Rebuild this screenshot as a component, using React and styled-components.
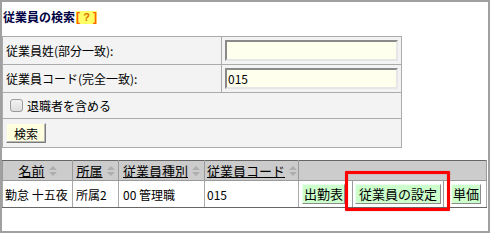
import React from "react";
import styled, { createGlobalStyle } from "styled-components";

const Global = createGlobalStyle`
  html, body { margin: 0; padding: 0; background: #fff; }
  body { font-family: "Noto Sans CJK JP", "Noto Sans", sans-serif; color: #000; }
`;

const Frame = styled.div`
  position: relative;
  width: 490px;
  height: 233px;
  box-sizing: border-box;
  border: 2px solid #a0a0a0;
  background: #fff;
  overflow: hidden;
`;

const Title = styled.h1`
  display: flex;
  align-items: center;
  height: 16px;
  margin: 7px 0 11px 1px;
  font-size: 12px;
  line-height: 16px;
  font-weight: bold;
  color: #000044;
`;

const Help = styled.span`
  display: inline-flex;
  align-items: center;
  justify-content: space-between;
  width: 21px;
  height: 13px;
  margin-left: 1px;
  background: #ffff66;
  color: #ff6600;
  font-size: 12px;
  line-height: 13px;
  font-weight: bold;
  font-family: "Liberation Sans", sans-serif;
`;

const Bracket = styled.span`
  color: #ff6600;
  font-weight: bold;
`;

const QMark = styled.span`
  color: #e07000;
  font-weight: bold;
  font-size: 11px;
`;

const SearchTable = styled.table`
  width: 400px;
  border-collapse: collapse;
  border: 1px solid #666;
  font-size: 12px;
`;

const Row = styled.tr`
  height: ${(p) => p.$h}px;
`;

const Cell = styled.td`
  background: #f3f3f3;
  border: 1px solid #ababab;
  padding: 0 ${(p) => p.$px ?? 3}px;
  white-space: nowrap;
  vertical-align: middle;
`;

const LabelCell = styled(Cell)`
  width: 212px;
`;

const TextInput = styled.input`
  display: block;
  box-sizing: border-box;
  width: 173px;
  height: 21px;
  margin: 0;
  padding: 0 1px;
  border: 2px solid;
  border-color: #8a8a8a #e6e6e6 #e6e6e6 #8a8a8a;
  background: #ffffee;
  font-family: "Noto Sans CJK JP", sans-serif;
  font-size: 12px;
  color: #000;
  outline: none;
`;

const CheckLabel = styled.label`
  display: flex;
  align-items: center;
  gap: 4px;
`;

const Check = styled.input`
  appearance: none;
  margin: 0;
  width: 13px;
  height: 13px;
  box-sizing: border-box;
  border: 1px solid #9c9c9c;
  border-radius: 3px;
  background: linear-gradient(#f2f2f2, #dedede);
`;

const SearchButton = styled.button`
  display: block;
  box-sizing: border-box;
  width: 40px;
  height: 20px;
  margin: 0;
  padding: 0;
  border: 1px solid;
  border-color: #f4f4f4 #7c7c7c #7c7c7c #f4f4f4;
  box-shadow: inset -1px -1px 0 #b8b8b8;
  background: #ffffe0;
  font-family: "Noto Sans CJK JP", sans-serif;
  font-size: 12px;
  color: #000;
`;

const ResultTable = styled.table`
  width: 485px;
  margin-top: 12px;
  border-collapse: collapse;
  table-layout: fixed;
  border: 1px solid #666;
  font-size: 12px;
`;

const HeadCell = styled.th`
  height: 18px;
  padding: 0 2px;
  background: #cccccc;
  border: 1px solid #9a9a9a;
  border-top-color: #666;
  font-size: 13px;
  font-weight: normal;
  text-align: center;
  white-space: nowrap;
  overflow: hidden;
`;

const HeadInner = styled.span`
  display: inline-flex;
  align-items: center;
  gap: 4px;
`;

const SortLink = styled.a`
  color: #000;
  text-decoration: underline;
  cursor: pointer;
`;

const DataCell = styled.td`
  height: 26px;
  padding: 0 ${(p) => p.$px ?? 3}px;
  background: #fff;
  border: 1px solid #aaaaaa;
  border-bottom-color: #666;
  white-space: nowrap;
  overflow: hidden;
`;

const ActionBar = styled.div`
  display: flex;
  align-items: center;
  gap: 7px;
  height: 26px;
`;

const Framed = styled.span`
  align-self: stretch;
  display: flex;
  align-items: center;
  padding: 0 2px;
  border-left: 1px solid #9a9a9a;
  border-right: 1px solid #9a9a9a;
`;

const ActionButton = styled.button`
  box-sizing: border-box;
  height: 20px;
  margin: 0;
  padding: 0 ${(p) => p.$px ?? 1}px;
  border: 1px solid;
  border-color: #ecffec #8c8c8c #8c8c8c #ecffec;
  background: #ccffcc;
  font-family: "Noto Sans CJK JP", sans-serif;
  font-size: 13px;
  line-height: 18px;
  color: #000;
`;

const Highlight = styled.div`
  position: absolute;
  left: 343px;
  top: 169px;
  width: 105px;
  height: 40px;
  box-sizing: border-box;
  border: 3px solid #ff0000;
  border-radius: 1px;
  box-shadow: 0 0 1px rgba(255, 0, 0, 0.7), inset 0 0 1px rgba(255, 0, 0, 0.7);
  pointer-events: none;
`;

const SortIcon = () => (
  <svg width="8" height="10" viewBox="0 0 8 10" aria-hidden="true">
    <polygon points="4,0 8,4 0,4" fill="#aeaeae" />
    <polygon points="0,6 8,6 4,10" fill="#aeaeae" />
  </svg>
);

const SortHead = ({ children }) => (
  <HeadCell>
    <HeadInner>
      <SortLink>{children}</SortLink>
      <SortIcon />
    </HeadInner>
  </HeadCell>
);

export default function App() {
  return (
    <>
      <Global />
      <Frame>
        <Title>
          従業員の検索
          <Help>
            <Bracket>[</Bracket>
            <QMark>?</QMark>
            <Bracket>]</Bracket>
          </Help>
        </Title>

        <SearchTable>
          <tbody>
            <Row $h={28}>
              <LabelCell>従業員姓(部分一致):</LabelCell>
              <Cell>
                <TextInput defaultValue="" />
              </Cell>
            </Row>
            <Row $h={28}>
              <LabelCell>従業員コード(完全一致):</LabelCell>
              <Cell>
                <TextInput defaultValue="015" />
              </Cell>
            </Row>
            <Row $h={26}>
              <Cell colSpan={2} $px={7}>
                <CheckLabel>
                  <Check type="checkbox" />
                  退職者を含める
                </CheckLabel>
              </Cell>
            </Row>
            <Row $h={29}>
              <Cell colSpan={2}>
                <SearchButton>検索</SearchButton>
              </Cell>
            </Row>
          </tbody>
        </SearchTable>

        <ResultTable>
          <colgroup>
            <col style={{ width: 70 }} />
            <col style={{ width: 46 }} />
            <col style={{ width: 86 }} />
            <col style={{ width: 94 }} />
            <col />
          </colgroup>
          <thead>
            <tr>
              <SortHead>名前</SortHead>
              <SortHead>所属</SortHead>
              <SortHead>従業員種別</SortHead>
              <SortHead>従業員コード</SortHead>
              <HeadCell />
            </tr>
          </thead>
          <tbody>
            <tr>
              <DataCell $px={2}>勤怠 十五夜</DataCell>
              <DataCell>所属2</DataCell>
              <DataCell $px={4}>00 管理職</DataCell>
              <DataCell $px={2}>015</DataCell>
              <DataCell>
                <ActionBar>
                  <ActionButton>出勤表</ActionButton>
                  <Framed>
                    <ActionButton $px={3}>従業員の設定</ActionButton>
                  </Framed>
                  <ActionButton>単価</ActionButton>
                </ActionBar>
              </DataCell>
            </tr>
          </tbody>
        </ResultTable>

        <Highlight />
      </Frame>
    </>
  );
}
